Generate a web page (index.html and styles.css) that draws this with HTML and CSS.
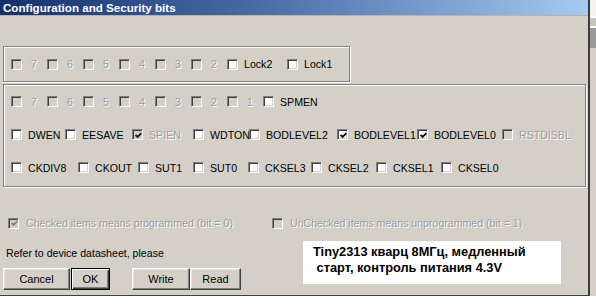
FILE: index.html
```html
<!DOCTYPE html>
<html>
<head>
<meta charset="utf-8">
<link rel="stylesheet" href="styles.css">
</head>
<body>
<div class="screen">
  <div class="dialog">
    <div class="titlebar">Configuration and Security bits</div>

    <div class="group group-lock">
      <div class="row cols-lock">
        <label class="item off"><span class="cb"></span><span class="num">7</span></label>
        <label class="item off"><span class="cb"></span><span class="num">6</span></label>
        <label class="item off"><span class="cb"></span><span class="num">5</span></label>
        <label class="item off"><span class="cb"></span><span class="num">4</span></label>
        <label class="item off"><span class="cb"></span><span class="num">3</span></label>
        <label class="item off"><span class="cb"></span><span class="num">2</span></label>
        <label class="item"><span class="cb"></span><span>Lock2</span></label>
        <label class="item"><span class="cb"></span><span>Lock1</span></label>
      </div>
    </div>

    <div class="group group-fuse">
      <div class="row cols-bits">
        <label class="item off"><span class="cb"></span><span class="num">7</span></label>
        <label class="item off"><span class="cb"></span><span class="num">6</span></label>
        <label class="item off"><span class="cb"></span><span class="num">5</span></label>
        <label class="item off"><span class="cb"></span><span class="num">4</span></label>
        <label class="item off"><span class="cb"></span><span class="num">3</span></label>
        <label class="item off"><span class="cb"></span><span class="num">2</span></label>
        <label class="item off"><span class="cb"></span><span class="num">1</span></label>
        <label class="item"><span class="cb"></span><span>SPMEN</span></label>
      </div>
      <div class="row cols-hi">
        <label class="item"><span class="cb"></span><span>DWEN</span></label>
        <label class="item"><span class="cb"></span><span>EESAVE</span></label>
        <label class="item off"><span class="cb checked"><svg viewBox="0 0 7 7" class="tick"><polyline points="0.6,3 2.6,5 6.4,1.2"/></svg></span><span>SPIEN</span></label>
        <label class="item"><span class="cb"></span><span>WDTON</span></label>
        <label class="item"><span class="cb"></span><span>BODLEVEL2</span></label>
        <label class="item"><span class="cb checked"><svg viewBox="0 0 7 7" class="tick"><polyline points="0.6,3 2.6,5 6.4,1.2"/></svg></span><span>BODLEVEL1</span></label>
        <label class="item"><span class="cb checked"><svg viewBox="0 0 7 7" class="tick"><polyline points="0.6,3 2.6,5 6.4,1.2"/></svg></span><span>BODLEVEL0</span></label>
        <label class="item off"><span class="cb"></span><span>RSTDISBL</span></label>
      </div>
      <div class="row cols-lo">
        <label class="item"><span class="cb"></span><span>CKDIV8</span></label>
        <label class="item"><span class="cb"></span><span>CKOUT</span></label>
        <label class="item"><span class="cb"></span><span>SUT1</span></label>
        <label class="item"><span class="cb"></span><span>SUT0</span></label>
        <label class="item"><span class="cb"></span><span>CKSEL3</span></label>
        <label class="item"><span class="cb"></span><span>CKSEL2</span></label>
        <label class="item"><span class="cb"></span><span>CKSEL1</span></label>
        <label class="item"><span class="cb"></span><span>CKSEL0</span></label>
      </div>
    </div>

    <div class="legend">
      <label class="item off wide"><span class="cb checked"><svg viewBox="0 0 7 7" class="tick"><polyline points="0.6,3 2.6,5 6.4,1.2"/></svg></span><span>Checked items means programmed (bit = 0)</span></label>
      <label class="item off wide"><span class="cb"></span><span>UnChecked items means unprogrammed (bit = 1)</span></label>
    </div>

    <div class="footer">
      <div class="footer-left">
        <div class="hint">Refer to device datasheet, please</div>
        <div class="buttons">
          <button class="btn btn-cancel">Cancel</button>
          <button class="btn btn-ok default">OK</button>
          <button class="btn btn-write">Write</button>
          <button class="btn btn-read">Read</button>
        </div>
      </div>
      <div class="note">Tiny2313 кварц 8МГц, медленный
 старт, контроль питания 4.3V</div>
    </div>
  </div>
  <div class="side">
    <div class="side-top"></div>
    <div class="side-line"></div>
    <div class="side-gap"></div>
    <div class="side-line"></div>
    <div class="side-block"></div>
    <div class="side-rest"></div>
  </div>
</div>
</body>
</html>
```

FILE: styles.css
```css
html, body {
  margin: 0;
  padding: 0;
  background: #ffffff;
}

body {
  width: 596px;
  height: 305px;
  overflow: hidden;
  font-family: "Liberation Sans", Arial, sans-serif;
  font-size: 10.6px;
  color: #000;
}

.screen {
  display: flex;
  align-items: flex-start;
}

.dialog {
  width: 588px;
  height: 295px;
  background: #d4d0c8;
  border-right: 2px solid #3c3c3c;
  border-bottom: 1px solid #404040;
  display: flex;
  flex-direction: column;
  flex: none;
}

.titlebar {
  height: 15px;
  line-height: 15px;
  padding-left: 3px;
  background: linear-gradient(to right, #14306c 0%, #4a6ea8 45%, #a6caf0 100%);
  color: #fff;
  font-weight: bold;
  font-size: 11.6px;
  white-space: nowrap;
  border-bottom: 1px solid #b8b4ac;
}

/* etched group boxes */
.group {
  margin-left: 3px;
  border: 1px solid #808080;
  box-shadow: inset 1px 1px 0 #fff, 1px 1px 0 #fff;
  box-sizing: border-box;
}

.group-lock {
  margin-top: 30px;
  width: 347px;
  height: 36px;
  display: flex;
  align-items: center;
}

.group-fuse {
  margin-top: 2px;
  width: 583px;
  height: 103px;
}

.row {
  display: grid;
  height: 33px;
  align-items: center;
  padding-left: 7px;
}

.group-lock .row {
  height: 34px;
  flex: 1;
}

.cols-lock { grid-template-columns: repeat(6, 36px) 60px auto; }
.cols-bits { grid-template-columns: repeat(7, 36px) auto; }
.cols-hi   { grid-template-columns: 54px 67px 61px 56px 88px 80px 85px auto; }
.cols-lo   { grid-template-columns: 67px 60px 55px 55px 63px 65px 65px auto; }

.item {
  display: flex;
  align-items: center;
  gap: 6px;
  overflow: hidden;
  white-space: nowrap;
  min-width: 0;
}

.num {
  margin-left: 3px;
}

/* classic sunken checkbox */
.cb {
  flex: none;
  width: 11px;
  height: 11px;
  box-sizing: border-box;
  border: 1px solid;
  border-color: #808080 #ffffff #ffffff #808080;
  box-shadow: inset 1px 1px 0 #404040, inset -1px -1px 0 #d4d0c8;
  background: #ffffff;
  display: flex;
  align-items: center;
  justify-content: center;
}

.tick {
  width: 7px;
  height: 7px;
  margin: 1px 0 0 1px;
  fill: none;
  stroke: #000;
  stroke-width: 1.8;
}

.off {
  color: #9c9c9c;
  text-shadow: 1px 1px 0 #ffffff;
}

.off .cb {
  background: #d4d0c8;
}

.off .tick {
  stroke: #1a1a1a;
}

.legend .off .tick {
  stroke: #808080;
}

.legend {
  display: grid;
  grid-template-columns: 264px auto;
  align-items: center;
  height: 16px;
  margin-top: 28px;
  padding-left: 8px;
}

.legend .item {
  gap: 7px;
}

.footer {
  display: flex;
  margin-top: 10px;
}

.footer-left {
  width: 300px;
  flex: none;
}

.hint {
  margin-top: 6px;
  margin-left: 6px;
  line-height: 13px;
  white-space: nowrap;
}

.buttons {
  display: flex;
  margin-top: 8px;
  margin-left: 3px;
}

.btn {
  height: 22px;
  padding: 0;
  font-family: "Liberation Sans", Arial, sans-serif;
  font-size: 11px;
  color: #000;
  background: #d4d0c8;
  box-sizing: border-box;
  border: 1px solid;
  border-color: #ffffff #404040 #404040 #ffffff;
  box-shadow: inset -1px -1px 0 #808080, inset 1px 1px 0 #e8e6e0;
}

.btn.default {
  border: 1px solid #000;
  box-shadow: inset 1px 1px 0 #ffffff, inset -1px -1px 0 #404040, inset -2px -2px 0 #808080;
}

.btn-cancel { width: 67px; }
.btn-ok     { width: 39px; margin-left: 1px; }
.btn-write  { width: 58px; margin-left: 22px; }
.btn-read   { width: 51px; }

.note {
  margin-left: 3px;
  width: 258px;
  height: 43px;
  box-sizing: border-box;
  padding: 3px 0 0 10px;
  background: #ffffff;
  font-weight: bold;
  font-size: 12.8px;
  line-height: 16px;
  white-space: pre;
  color: #000;
}

/* strip of the window behind, at the right edge */
.side {
  flex: 1;
  height: 296px;
  display: flex;
  flex-direction: column;
  background: #d4d0c8;
}

.side-top { height: 16px; background: #f4f2ee; }
.side-line { height: 2px; background: #ffffff; }
.side-gap { height: 8px; background: #c8c4bc; }
.side-block { height: 20px; background: #9a9a9a; }
.side-rest { flex: 1; background: #d4d0c8; }
```
